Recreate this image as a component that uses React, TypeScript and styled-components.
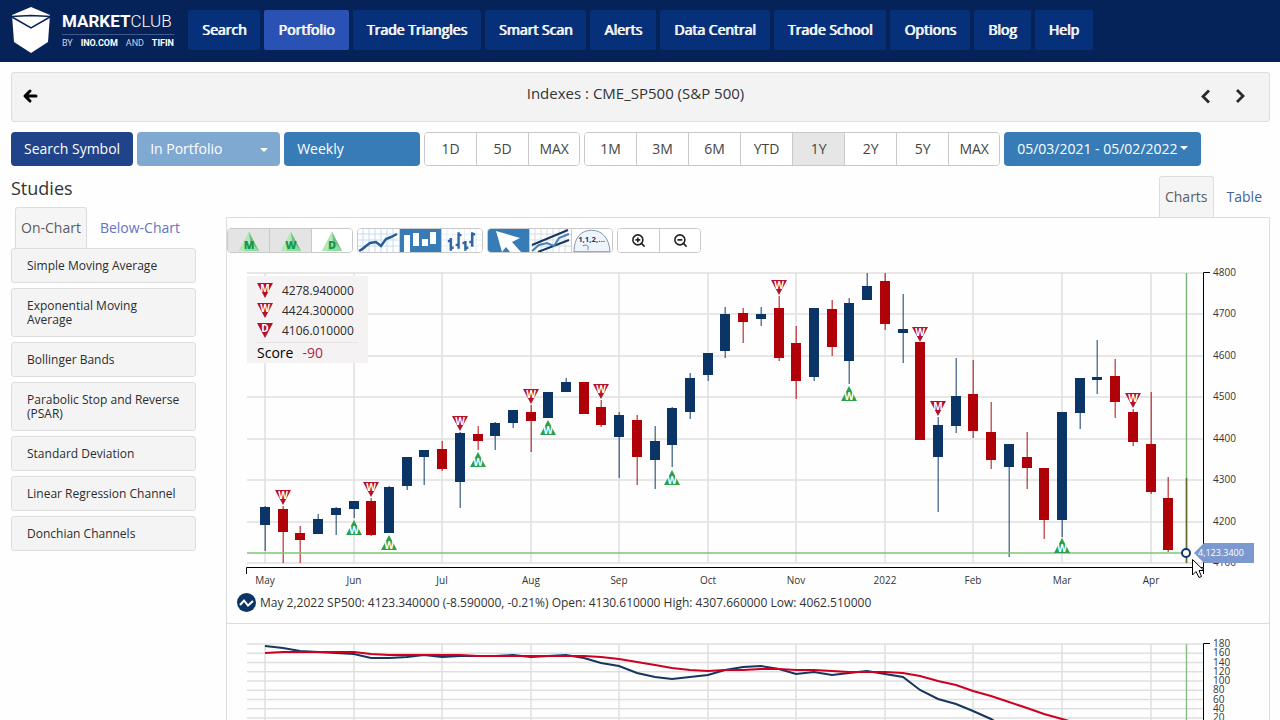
import React from "react";
import styled, { createGlobalStyle, css } from "styled-components";
import { ZoomIn, ZoomOut } from "lucide-react";

const GlobalStyle = createGlobalStyle`
  * { box-sizing: border-box; }
  body {
    margin: 0;
    background: #fefefe;
    color: #333;
    font-family: "Open Sans", "Noto Sans", "Liberation Sans", sans-serif;
    font-size: 14px;
  }
  button, select { font: inherit; cursor: pointer; }
  h1, h2 { margin: 0; }
  ul { margin: 0; padding: 0; list-style: none; }
  a { text-decoration: none; }
`;

const Page = styled.div`
  height: 100vh;
  overflow: hidden;
`;

/* ---------- header ---------- */

const Header = styled.header`
  display: flex;
  align-items: flex-start;
  height: 62px;
  padding: 0 11px;
  background: #052358;
`;

const Brand = styled.a`
  display: flex;
  align-items: flex-start;
  gap: 11px;
  width: 177px;
  padding-top: 6px;
  color: #fff;
`;

const BrandText = styled.span`
  display: flex;
  flex-direction: column;
  width: 112px;
  padding-top: 6px;
  font-family: Roboto, "Liberation Sans", sans-serif;
`;

const BrandName = styled.span`
  display: flex;
  justify-content: space-between;
  padding-bottom: 3px;
  border-bottom: 1px solid #3f5a8c;
  font-size: 17px;
  font-weight: 300;
  line-height: 19px;
  b { font-weight: 700; }
`;

const BrandOwner = styled.span`
  display: flex;
  justify-content: space-between;
  padding-top: 3px;
  color: #c9d3e6;
  font-size: 9px;
  line-height: 11px;
  b { font-weight: 700; color: #fff; }
`;

const Nav = styled.nav`
  display: flex;
  gap: 4px;
  padding-top: 10px;
`;

const NavLink = styled.a<{ $active?: boolean }>`
  padding: 0 14px;
  border-radius: 2px;
  background: ${(p) => (p.$active ? "#2a52b4" : "#06317a")};
  color: #fff;
  font-size: 14px;
  line-height: 40px;
  text-shadow: 1px 0 #fff;
  white-space: nowrap;
`;

/* ---------- symbol title and range bar ---------- */

const Main = styled.main`
  padding: 10px 10px 0 11px;
`;

const TitleBar = styled.div`
  display: flex;
  align-items: flex-start;
  justify-content: space-between;
  height: 50px;
  padding: 0 20px 0 10px;
  border: 1px solid #dddde0;
  border-radius: 3px;
  background: #f4f3f4;
`;

const TitleSide = styled.div<{ $end?: boolean }>`
  display: flex;
  justify-content: ${(p) => (p.$end ? "flex-end" : "flex-start")};
  gap: 16px;
  width: 60px;
  padding-top: 14px;
`;

const IconButton = styled.button`
  display: flex;
  padding: 0;
  border: 0;
  background: none;
  color: #111;
`;

const Title = styled.h1`
  font-size: 15px;
  font-weight: 500;
  line-height: 40px;
`;

const RangeBar = styled.div`
  display: flex;
  gap: 4px;
  margin-top: 10px;
`;

const solid = css`
  height: 34px;
  border: 0;
  border-radius: 4px;
  color: #fff;
  font-size: 14px;
  white-space: nowrap;
`;

const SolidButton = styled.button<{ $tone: string }>`
  ${solid}
  display: flex;
  align-items: center;
  gap: 2px;
  padding: 0 13px 2px;
  background: ${(p) => p.$tone};
`;

const SelectBox = styled.span<{ $width: number }>`
  position: relative;
  display: block;
  width: ${(p) => p.$width}px;
  svg { position: absolute; right: 12px; top: 16px; pointer-events: none; }
`;

const SolidSelect = styled.select<{ $tone: string }>`
  ${solid}
  width: 100%;
  padding: 0 13px 2px;
  appearance: none;
  background: ${(p) => p.$tone};
`;

const Group = styled.div`
  display: flex;
  border: 1px solid #c9c9cc;
  border-radius: 4px;
  overflow: hidden;
`;

const RangeButton = styled.button<{ $active?: boolean }>`
  width: 52px;
  height: 32px;
  padding: 0 0 2px;
  border: 0;
  background: ${(p) => (p.$active ? "#e6e6e6" : "#fff")};
  color: #444446;
  font-size: 14px;
  &:first-child, &:last-child { width: 51px; }
  & + & { border-left: 1px solid #c9c9cc; }
`;

/* ---------- columns ---------- */

const Columns = styled.div`
  display: flex;
  gap: 30px;
  margin-top: 10px;
`;

const Sidebar = styled.aside`
  flex: none;
  width: 185px;
`;

const SidebarTitle = styled.h2`
  height: 31px;
  font-size: 18px;
  font-weight: 500;
  line-height: 25px;
`;

const Tabs = styled.div<{ $end?: boolean }>`
  display: flex;
  justify-content: ${(p) => (p.$end ? "flex-end" : "flex-start")};
  padding: ${(p) => (p.$end ? "0" : "0 0 0 4px")};
`;

const Tab = styled.button<{ $active?: boolean }>`
  height: 41px;
  padding: 0 ${(p) => (p.$active ? 5 : 12)}px 2px;
  border: 1px solid ${(p) => (p.$active ? "#dddde0" : "transparent")};
  border-bottom: 0;
  border-radius: 3px 3px 0 0;
  background: ${(p) => (p.$active ? "#f5f5f5" : "transparent")};
  color: ${(p) => (p.$active ? "#5c5c5e" : "#6474c4")};
  font-size: 14px;
  white-space: nowrap;
`;

const TableTab = styled(Tab)`
  padding: 0 7px 2px 12px;
  color: #44639c;
`;

const StudyList = styled.ul`
  display: flex;
  flex-direction: column;
  gap: 5px;
`;

const Study = styled.button`
  display: block;
  width: 100%;
  padding: 10px 15px 9px;
  border: 1px solid #dddde0;
  border-radius: 3px;
  background: #f4f4f4;
  color: #2c2c2e;
  font-size: 12px;
  font-weight: 500;
  line-height: 14px;
  text-align: left;
`;

const ChartColumn = styled.section`
  flex: 1;
  min-width: 0;
`;

const ChartPanel = styled.div`
  border: 1px solid #dcdcdf;
  padding-top: 10px;
`;

const ToolRow = styled.div`
  display: flex;
  gap: 4px;
`;

const Tool = styled.button<{ $tone?: string }>`
  display: flex;
  align-items: center;
  justify-content: center;
  width: 42px;
  height: 23px;
  padding: 0;
  border: 0;
  background: ${(p) => p.$tone || "#fff"};
  color: #222;
  & + & { border-left: 1px solid #c9c9cc; }
  &:first-child, &:last-child { width: 41px; }
`;

const Plot = styled.div`
  position: relative;
  > svg { display: block; width: 100%; height: auto; }
`;

const Legend = styled.div`
  position: absolute;
  left: 20px;
  top: 23px;
  width: 121px;
  padding: 4px 10px 0;
  background: #f4f2f3;
`;

const LegendRow = styled.div`
  display: flex;
  align-items: center;
  gap: 9px;
  height: 20px;
  color: #2a2a2c;
  font-size: 12px;
`;

const Score = styled.div`
  display: flex;
  gap: 9px;
  margin-top: 2px;
  border-top: 1px solid #e6e4e5;
  color: #000;
  font-size: 14px;
  line-height: 20px;
  span { color: #b0283e; }
`;

const QuoteLine = styled.div`
  display: flex;
  align-items: center;
  gap: 4px;
  height: 22px;
  margin-bottom: 10px;
  padding-left: 10px;
  color: #333;
  font-size: 12px;
`;

const LowerPlot = styled(Plot)`
  border-top: 1px solid #dcdcdf;
`;

/* ---------- data ---------- */

const NAVY = "#0b3566";
const RED = "#b00008";
const MARK_RED = "#b3122c";
const MARK_GREEN = "#2ba14b";

const LEFT = 20;
const RIGHT = 976;
const STEP = 1771 / 100;
const columnX = (i: number) => Math.round(38 + i * STEP);

const months = ["May", "Jun", "Jul", "Aug", "Sep", "Oct", "Nov", "2022", "Feb", "Mar", "Apr"];
const prices = [4800, 4700, 4600, 4500, 4400, 4300, 4200, 4100];

/* rising?, high, body top, body bottom, low: distances below the 4800 line */
const candles: [number, number, number, number, number][] = [
  [1, 233, 235, 252, 278], [0, 233, 237, 259, 290], [0, 253, 261, 267, 290], [1, 241, 247, 261, 261],
  [1, 234, 236, 242, 262], [1, 228, 229, 236, 245], [0, 225, 229, 262, 263], [1, 213, 215, 260, 260],
  [1, 184, 185, 213, 217], [1, 177, 178, 184, 212], [0, 168, 177, 196, 198], [1, 159, 161, 209, 235],
  [0, 153, 162, 168, 177], [1, 149, 151, 163, 177], [1, 137, 138, 150, 155], [0, 132, 140, 148, 179],
  [1, 119, 120, 145, 145], [1, 105, 110, 119, 119], [0, 110, 110, 141, 141], [0, 127, 135, 152, 154],
  [1, 139, 143, 164, 205], [0, 142, 148, 184, 212], [1, 153, 169, 187, 216], [1, 134, 136, 172, 194],
  [1, 100, 106, 139, 146], [1, 80, 81, 102, 108], [1, 34, 42, 78, 85], [0, 35, 41, 49, 70],
  [1, 34, 42, 46, 53], [0, 23, 36, 85, 88], [0, 53, 71, 108, 126], [1, 36, 36, 104, 108],
  [0, 27, 37, 74, 83], [1, 25, 31, 88, 111], [1, 0, 14, 27, 27], [0, 0, 9, 51, 57],
  [1, 21, 57, 60, 90], [0, 70, 70, 167, 167], [1, 144, 153, 184, 239], [1, 85, 124, 153, 160],
  [0, 87, 122, 158, 165], [0, 129, 160, 187, 196], [1, 172, 172, 194, 284], [0, 159, 185, 195, 216],
  [0, 196, 196, 247, 266], [1, 139, 140, 247, 264], [1, 105, 106, 140, 156], [1, 67, 105, 107, 121],
  [0, 86, 104, 129, 145], [0, 136, 140, 169, 173], [0, 119, 172, 219, 221], [0, 204, 226, 277, 279],
];

const sellMarks: [number, number, string][] = [
  [1, 217, "W"], [6, 209, "W"], [11, 143, "W"], [15, 116, "W"], [19, 111, "W"],
  [29, 7, "W"], [37, 54, "W"], [38, 128, "M"], [49, 120, "W"],
];
const buyMarks: [number, number][] = [
  [5, 247], [7, 262], [12, 179], [16, 147], [23, 197], [33, 113], [45, 265],
];

const fastLine = [
  22, 24, 27, 28, 29, 30, 34, 34, 33, 31, 33, 32, 32, 32, 31, 33, 32, 31, 34, 39, 42, 49, 53, 55, 53, 51,
  46, 43, 42, 45, 50, 48, 51, 49, 47, 50, 53, 66, 75, 80, 87, 95, 106,
];
const slowLine = [
  29, 28, 28, 28, 28, 28, 30, 31, 31, 31, 31, 31, 32, 32, 32, 32, 32, 32, 32, 33, 35, 38, 41, 44, 46, 47,
  46, 46, 45, 45, 46, 46, 47, 48, 48, 48, 49, 52, 57, 61, 67, 72, 78, 84, 90, 95, 100,
];
const toPoints = (ys: number[]) => ys.map((y, i) => `${columnX(i)},${y}`).join(" ");

/* ---------- small drawings ---------- */

const Caret = () => (
  <svg width="8" height="4" viewBox="0 0 8 4" aria-hidden="true">
    <path d="M0 0h8L4 4z" fill="#fff" />
  </svg>
);

const SellGlyph = ({ letter }: { letter: string }) => (
  <g>
    <path d="M0 0H16L8 15Z" fill={MARK_RED} />
    <text x="8" y="9" textAnchor="middle" fontSize="10" fontWeight="700" fill="#fff">
      {letter}
    </text>
  </g>
);

const BuyGlyph = () => (
  <g>
    <path d="M0 15H16L8 0Z" fill={MARK_GREEN} />
    <text x="8" y="14" textAnchor="middle" fontSize="10" fontWeight="700" fill="#fff">
      W
    </text>
  </g>
);

const GreenTriangle = ({ letter }: { letter: string }) => (
  <svg width="24" height="23" viewBox="0 0 24 23">
    <path d="M12 3 22 22H2Z" fill="#8fdc9f" />
    <path d="M12 3 16 11 7 22H2Z" fill="#b2e8bb" />
    <path d="M12 3 22 22 13 12Z" fill="#78bd88" />
    <text x="12" y="20" textAnchor="middle" fontSize="11" fontWeight="800" fill="#16964a">
      {letter}
    </text>
  </svg>
);

const toolGrid = "M5 0V23M11 0V23M17 0V23M23 0V23M29 0V23M35 0V23M0 5H41M0 11H41M0 17H41";

const LineToolIcon = () => (
  <svg width="41" height="23" viewBox="0 0 41 23">
    <path d={toolGrid} stroke="#c3dcf0" fill="none" />
    <path d="M1 22C5 20 6 19 8 17L12 14 18 13 23 17 28 10 33 8 39 5" stroke="#2a5c94" strokeWidth="2.500" fill="none" />
  </svg>
);

const CandleToolIcon = () => (
  <svg width="41" height="23" viewBox="0 0 41 23">
    <path d="M4 6h6v17H4zM13 4h6v13h-6zM22 10h6v7h-6zM30 3h6v12h-6z" fill="#fff" />
  </svg>
);

const BarToolIcon = () => (
  <svg width="41" height="23" viewBox="0 0 41 23">
    <path d={toolGrid} stroke="#e4eef7" fill="none" />
    <path
      d="M9 9V22M6 12h3M9 19h3M17 3V20M14 16h3M17 6h3M24 12V22M21 14h3M24 19h3M31 3V18M28 13h3M31 5h3"
      stroke="#2f66a0"
      strokeWidth="2.500"
      fill="none"
    />
  </svg>
);

const PointerToolIcon = () => (
  <svg width="41" height="23" viewBox="0 0 41 23">
    <path d="M8 2 32 9 24 13 33 23H22L18 18 14 23Z" fill="#fff" />
  </svg>
);

const TrendToolIcon = () => (
  <svg width="41" height="23" viewBox="0 0 41 23">
    <path d={toolGrid} stroke="#d3dce6" fill="none" />
    <path d="M2 16 38 1M8 23 39 11" stroke="#16365f" strokeWidth="2" fill="none" />
    <path d="M2 22 9 16 17 14 24 17 29 9 39 5" stroke="#4780b8" strokeWidth="2" fill="none" />
  </svg>
);

const FibonacciToolIcon = () => (
  <svg width="41" height="23" viewBox="0 0 41 23">
    <path d="M2 23C2 9 9 1 20 1S38 9 39 23Z" fill="#edf4fb" stroke="#7f93aa" />
    <path d="M11 17c4-2 7 0 5 4" stroke="#5e7da3" fill="none" />
    <text x="20" y="13" textAnchor="middle" fontSize="8" fontWeight="700" fill="#1d3c69">
      1,1,2,...
    </text>
  </svg>
);

const ranges = ["1M", "3M", "6M", "YTD", "1Y", "2Y", "5Y", "MAX"];
const menu = [
  "Search", "Portfolio", "Trade Triangles", "Smart Scan", "Alerts",
  "Data Central", "Trade School", "Options", "Blog", "Help",
];
const studies = [
  "Simple Moving Average", "Exponential Moving Average", "Bollinger Bands",
  "Parabolic Stop and Reverse (PSAR)", "Standard Deviation",
  "Linear Regression Channel", "Donchian Channels",
];

/* ---------- charts ---------- */

const TOP = 20;
const priceY = (i: number) => TOP + Math.round((i * 290) / 7);

const PriceChart = () => (
  <svg viewBox="0 0 1042 338" role="img" aria-label="Weekly candlestick chart of the S&P 500">
    <g stroke="#dfdfe1" strokeWidth="1.5">
      {prices.map((p, i) => (
        <line key={p} x1={LEFT} x2={RIGHT} y1={priceY(i)} y2={priceY(i)} />
      ))}
      {months.map((m, i) => (
        <line key={m} x1={columnX(i * 5)} x2={columnX(i * 5)} y1={TOP} y2={310} />
      ))}
    </g>
    <path d="M959.5 20V310" stroke="#7fb57b" strokeWidth="1.5" />
    <path d="M959.5 225V310" stroke="#5f6b30" strokeWidth="1.5" />
    {candles.map(([up, high, top, bottom, low], i) => (
      <g key={i} fill={up ? NAVY : RED}>
        <rect x={columnX(i) - 0.5} y={TOP + high} width="1.5" height={low - high} opacity="0.65" />
        <rect x={columnX(i) - 5} y={TOP + top - 1} width="10" height={bottom - top + 1} />
      </g>
    ))}
    <path d="M20 300H959" stroke="#7cc470" strokeWidth="1.5" />
    {sellMarks.map(([i, y, letter]) => (
      <g key={i} transform={`translate(${columnX(i) - 8} ${TOP + y})`}>
        <SellGlyph letter={letter} />
      </g>
    ))}
    {buyMarks.map(([i, y]) => (
      <g key={i} transform={`translate(${columnX(i) - 8} ${TOP + y})`}>
        <BuyGlyph />
      </g>
    ))}
    <path d="M19.500 321V314.500H976.500V321M983 19.500H976.500V314" stroke="#000" fill="none" />
    <g fontSize="10" fill="#333">
      {months.map((m, i) => (
        <text key={m} x={columnX(i * 5)} y="331" textAnchor="middle">{m}</text>
      ))}
      {prices.map((p, i) => (
        <text key={p} x="986" y={priceY(i) + 3}>{p}</text>
      ))}
    </g>
    <path d="M967 300 977 290H1027V310H977Z" fill="#7b98cf" />
    <text x="971" y="303" fontSize="9" fill="#fff">4,123.3400</text>
    <circle cx="959" cy="300" r="4" fill="#fff" stroke="#12366b" strokeWidth="2" />
    <path d="M965.500 306.500V322L969 318.500 972 324.500 974.500 323.500 972 317.500H977Z" fill="#fff" stroke="#000" />
  </svg>
);

const oscillatorLabels = [180, 160, 140, 120, 100, 80, 60, 40, 20];

const OscillatorChart = () => (
  <svg viewBox="0 0 1042 160" role="img" aria-label="Oscillator chart">
    <g stroke="#dfdfe1" strokeWidth="1.5">
      {oscillatorLabels.map((v, i) => (
        <line key={v} x1={LEFT} x2={RIGHT} y1={20 + i * 9.25} y2={20 + i * 9.25} />
      ))}
      {months.map((m, i) => (
        <line key={m} x1={columnX(i * 5)} x2={columnX(i * 5)} y1="20" y2="160" />
      ))}
    </g>
    <path d="M959.5 20V160" stroke="#8cbf88" strokeWidth="1.5" />
    <polyline points={toPoints(fastLine)} fill="none" stroke="#16365f" strokeWidth="2" />
    <polyline points={toPoints(slowLine)} fill="none" stroke="#cc0022" strokeWidth="2" />
    <path d="M983 19.500H976.500V160" stroke="#000" fill="none" />
    <g fontSize="10" fill="#333">
      {oscillatorLabels.map((v, i) => (
        <text key={v} x="986" y={23 + i * 9.25}>{v}</text>
      ))}
    </g>
  </svg>
);

export default function App() {
  return (
    <Page>
      <GlobalStyle />
      <Header>
        <Brand href="#" aria-label="MarketClub home">
          <svg width="40" height="48" viewBox="0 0 40 48" aria-hidden="true">
            <path d="M20 1 39 9 37 36 20 47 3 36 1 9Z" fill="#fff" />
            <path d="M0 10.500 20 9.500 40 10.500M1 11 20 22 39 11" fill="none" stroke="#052358" strokeWidth="1.500" />
          </svg>
          <BrandText>
            <BrandName><span><b>MARKET</b>CLUB</span></BrandName>
            <BrandOwner><span>BY</span><b>INO.COM</b><span>AND</span><b>TIFIN</b></BrandOwner>
          </BrandText>
        </Brand>
        <Nav>
          {menu.map((item) => (
            <NavLink key={item} href="#" $active={item === "Portfolio"}>{item}</NavLink>
          ))}
        </Nav>
      </Header>

      <Main>
        <TitleBar>
          <TitleSide>
            <IconButton aria-label="Back">
              <svg width="18" height="18" viewBox="0 0 18 18">
                <path d="M8 4 3 9 8 14M3.500 9H14" fill="none" stroke="#000" strokeWidth="3" strokeLinecap="round" strokeLinejoin="round" />
              </svg>
            </IconButton>
          </TitleSide>
          <Title>Indexes : CME_SP500 (S&amp;P 500)</Title>
          <TitleSide $end>
            <IconButton aria-label="Previous symbol">
              <svg width="18" height="18" viewBox="0 0 18 18">
                <path d="M12 3.500 6 9.500 12 15.500" fill="none" stroke="#2a2a2a" strokeWidth="2.800" />
              </svg>
            </IconButton>
            <IconButton aria-label="Next symbol">
              <svg width="18" height="18" viewBox="0 0 18 18">
                <path d="M6 3 12 9 6 15" fill="none" stroke="#2a2a2a" strokeWidth="2.800" />
              </svg>
            </IconButton>
          </TitleSide>
        </TitleBar>

        <RangeBar>
          <SolidButton $tone="#21438a">Search Symbol</SolidButton>
          <SelectBox $width={143}>
            <SolidSelect $tone="#80a9d2" aria-label="Portfolio">
              <option>In Portfolio</option>
            </SolidSelect>
            <Caret />
          </SelectBox>
          <SelectBox $width={136}>
            <SolidSelect $tone="#377cb6" aria-label="Interval">
              <option>Weekly</option>
            </SolidSelect>
          </SelectBox>
          <Group>
            {["1D", "5D", "MAX"].map((r) => <RangeButton key={r}>{r}</RangeButton>)}
          </Group>
          <Group>
            {ranges.map((r) => (
              <RangeButton key={r} $active={r === "1Y"} aria-pressed={r === "1Y"}>{r}</RangeButton>
            ))}
          </Group>
          <SolidButton $tone="#377cb6">05/03/2021 - 05/02/2022<Caret /></SolidButton>
        </RangeBar>

        <Columns>
          <Sidebar>
            <SidebarTitle>Studies</SidebarTitle>
            <Tabs>
              <Tab $active>On-Chart</Tab>
              <Tab>Below-Chart</Tab>
            </Tabs>
            <StudyList>
              {studies.map((s) => (
                <li key={s}><Study>{s}</Study></li>
              ))}
            </StudyList>
          </Sidebar>

          <ChartColumn>
            <Tabs $end>
              <Tab $active>Charts</Tab>
              <TableTab>Table</TableTab>
            </Tabs>
            <ChartPanel>
              <ToolRow>
                <Group>
                  <Tool $tone="#e4e4e4" aria-label="Monthly triangles"><GreenTriangle letter="M" /></Tool>
                  <Tool $tone="#e4e4e4" aria-label="Weekly triangles"><GreenTriangle letter="W" /></Tool>
                  <Tool aria-label="Daily triangles"><GreenTriangle letter="D" /></Tool>
                </Group>
                <Group>
                  <Tool aria-label="Line"><LineToolIcon /></Tool>
                  <Tool $tone="#377cb6" aria-label="Candlestick"><CandleToolIcon /></Tool>
                  <Tool aria-label="Bars"><BarToolIcon /></Tool>
                </Group>
                <Group>
                  <Tool $tone="#377cb6" aria-label="Pointer"><PointerToolIcon /></Tool>
                  <Tool aria-label="Trend line"><TrendToolIcon /></Tool>
                  <Tool aria-label="Fibonacci"><FibonacciToolIcon /></Tool>
                </Group>
                <Group>
                  <Tool aria-label="Zoom in"><ZoomIn size={15} strokeWidth={2.5} /></Tool>
                  <Tool aria-label="Zoom out"><ZoomOut size={15} strokeWidth={2.5} /></Tool>
                </Group>
              </ToolRow>
              <Plot>
                <PriceChart />
                <Legend>
                  {[["M", "4278.940000"], ["W", "4424.300000"], ["D", "4106.010000"]].map(([l, v]) => (
                    <LegendRow key={l}>
                      <svg width="16" height="15" viewBox="0 0 16 15"><SellGlyph letter={l} /></svg>
                      {v}
                    </LegendRow>
                  ))}
                  <Score>Score <span>-90</span></Score>
                </Legend>
              </Plot>
              <QuoteLine>
                <svg width="19" height="19" viewBox="0 0 19 19" aria-hidden="true">
                  <circle cx="9.500" cy="9.500" r="9.500" fill="#0b3566" />
                  <path d="M3 12 7 7.500 11 12.500 16 8" fill="none" stroke="#fff" strokeWidth="2" />
                </svg>
                May 2,2022 SP500: 4123.340000 (-8.590000, -0.21%) Open: 4130.610000 High: 4307.660000 Low: 4062.510000
              </QuoteLine>
              <LowerPlot>
                <OscillatorChart />
              </LowerPlot>
            </ChartPanel>
          </ChartColumn>
        </Columns>
      </Main>
    </Page>
  );
}
